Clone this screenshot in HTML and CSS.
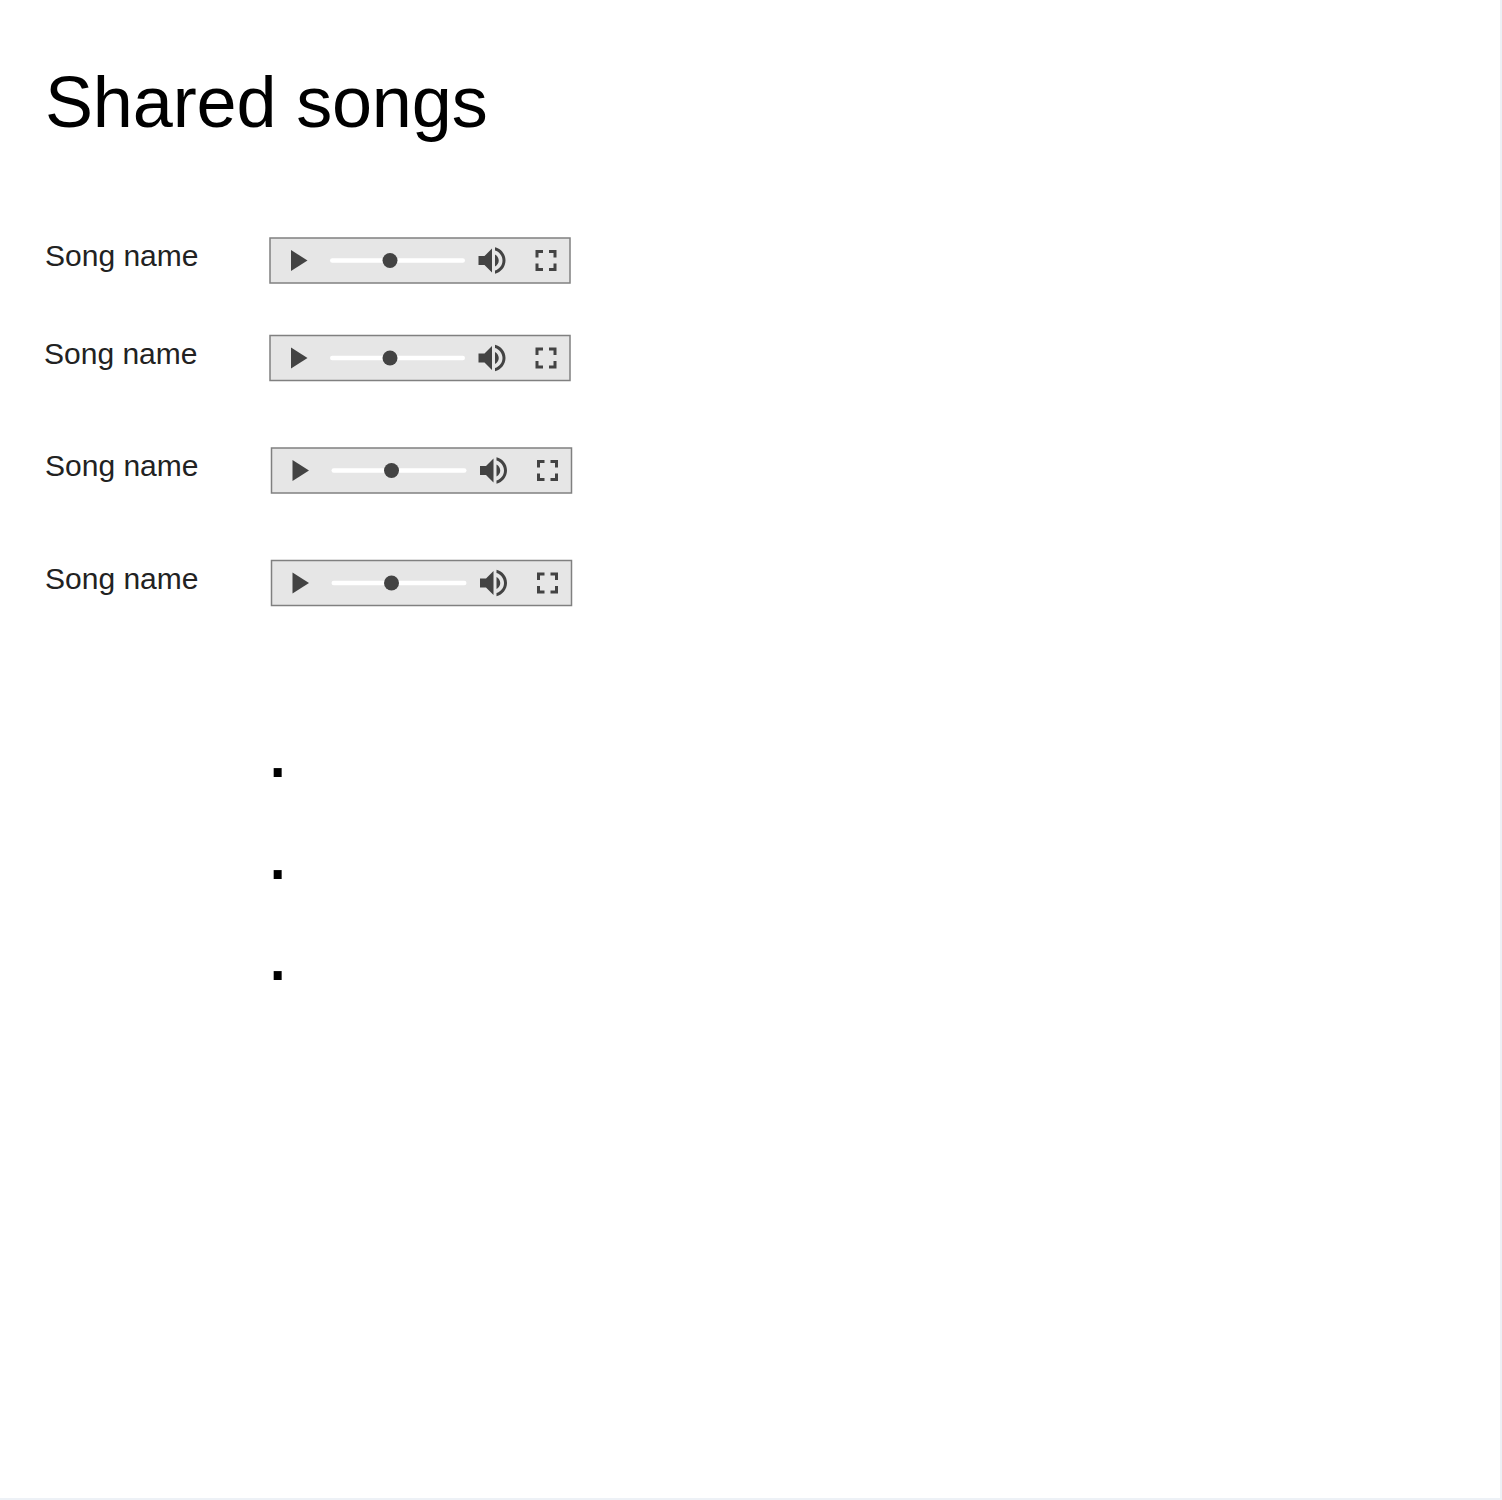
FILE: index.html
```html
<!DOCTYPE html>
<html lang="en">
<head>
<meta charset="utf-8">
<title>Shared songs</title>
<link rel="stylesheet" href="styles.css">
</head>
<body>
<svg class="defs" aria-hidden="true">
  <defs>
    <g id="player">
      <rect width="300" height="45" fill="#e6e6e6" stroke="#808080" stroke-width="1.5"/>
      <path transform="translate(9 4.5) scale(1.5)" fill="#434343" d="M8 5v14l11-7z"/>
      <path d="M62.25 22.5H192.75" stroke="#fff" stroke-width="4.5" stroke-linecap="round"/>
      <circle cx="120" cy="22.5" r="7.5" fill="#434343"/>
      <path transform="translate(204 4.5) scale(1.5)" fill="#434343" d="M3 9v6h4l5 5V4L7 9H3zm13.5 3c0-1.77-1.02-3.29-2.5-4.03v8.05c1.48-.73 2.5-2.25 2.5-4.02zM14 3.23v2.06c2.89.86 5 3.54 5 6.71s-2.11 5.85-5 6.71v2.06c4.01-.91 7-4.49 7-8.77s-2.99-7.86-7-8.77z"/>
      <path transform="translate(258 4.5) scale(1.5)" fill="#434343" d="M7 14H5v5h5v-2H7v-3zm-2-4h2V7h3V5H5v5zm12 7h-3v2h5v-5h-2v3zM14 5v2h3v3h2V5h-5z"/>
    </g>
  </defs>
</svg>
<main class="page">
  <h1 class="title">Shared songs</h1>
  <ul class="songs">
    <li class="song">
      <span class="name">Song name</span>
      <svg class="player" role="img" aria-label="Audio player"><use href="#player" x="2" y="2"/></svg>
    </li>
    <li class="song song-second">
      <span class="name">Song name</span>
      <svg class="player" role="img" aria-label="Audio player"><use href="#player" x="2" y="1.5"/></svg>
    </li>
    <li class="song song-inset">
      <span class="name">Song name</span>
      <svg class="player" role="img" aria-label="Audio player"><use href="#player" x="1.5" y="2"/></svg>
    </li>
    <li class="song song-inset">
      <span class="name">Song name</span>
      <svg class="player" role="img" aria-label="Audio player"><use href="#player" x="1.5" y="1.5"/></svg>
    </li>
  </ul>
  <div class="more"><span>.</span><span>.</span><span>.</span></div>
</main>
</body>
</html>
```
FILE: styles.css
```css
* {
  box-sizing: border-box;
}

body {
  margin: 0;
  background: #fff;
  font-family: "Liberation Sans", Arial, sans-serif;
}

.defs {
  display: block;
  width: 0;
  height: 0;
}

.page {
  height: 1500px;
  padding: 61px 0 0 45px;
  border-right: 2px solid #edf1f6;
  border-bottom: 2px solid #edf1f6;
  overflow: hidden;
}

.title {
  margin: 0;
  color: #000;
  font-size: 72px;
  font-weight: 400;
  letter-spacing: -0.15px;
  line-height: 82px;
}

.songs {
  display: grid;
  grid-template-rows: 98px 112px 113px 48px;
  margin: 93px 0 0;
  padding: 0;
  list-style: none;
}

.song {
  display: grid;
  grid-template-columns: 223px 304px;
  align-items: start;
}

.song-second {
  grid-template-columns: 224px 304px;
  margin-left: -1px;
}

.song-inset {
  grid-template-columns: 225px 304px;
}

.name {
  padding-top: 3px;
  color: #222;
  font-size: 30px;
  line-height: 34px;
}

.player {
  display: block;
  width: 304px;
  height: 48px;
}

.more {
  display: grid;
  grid-template-rows: 102px 101px 101px;
  margin: 91px 0 0 221px;
  color: #000;
  font-size: 84px;
  line-height: 101px;
}
```
